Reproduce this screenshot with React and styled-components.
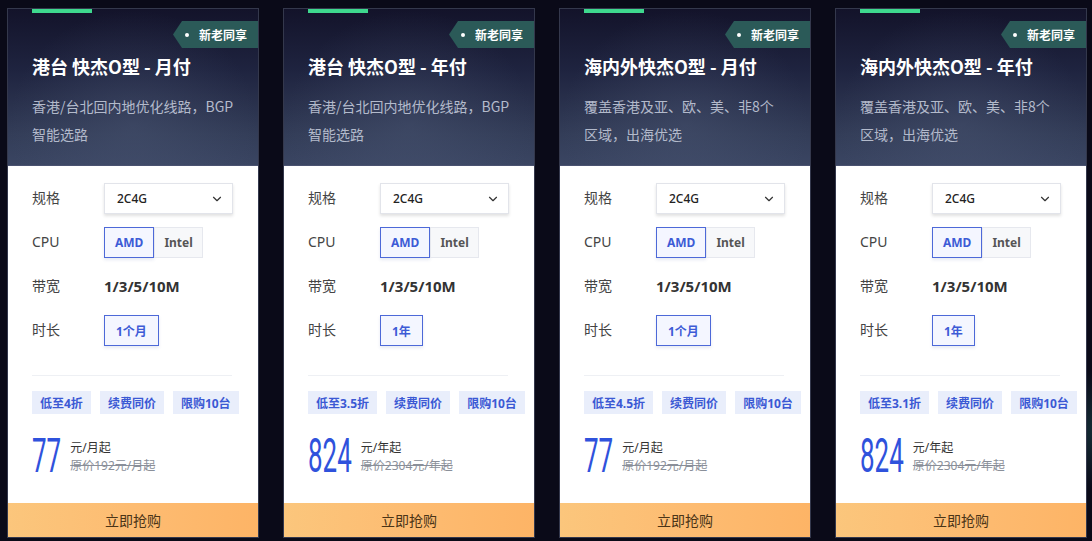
import React from "react";
import styled, { createGlobalStyle } from "styled-components";
import { ChevronDown } from "lucide-react";

const Global = createGlobalStyle`
  html, body { margin: 0; padding: 0; }
  body {
    background: #0a0a18;
    font-family: "Noto Sans", "Noto Sans CJK SC", sans-serif;
    width: 1092px;
    height: 541px;
    overflow: hidden;
  }
`;

const Page = styled.div`
  position: relative;
  width: 1092px;
  height: 541px;
  box-sizing: border-box;
  padding: 8px 0 0 7px;
  display: flex;
  gap: 24px;
  background:
    radial-gradient(circle at 1100px 430px, rgba(40, 110, 110, 0.35) 0, rgba(10, 10, 24, 0) 60px),
    #0a0a18;
`;

const Card = styled.div`
  width: 252px;
  height: 530px;
  box-sizing: border-box;
  border: 1px solid #34384c;
  display: flex;
  flex-direction: column;
  background: #fff;
`;

const Header = styled.div`
  position: relative;
  height: 157px;
  box-sizing: border-box;
  padding: 44px 24px 0 24px;
  background:
    radial-gradient(ellipse at 50% 75%, rgba(80, 92, 122, 0.35) 0, rgba(0, 0, 0, 0) 70%),
    linear-gradient(180deg, #13132a 0%, #1f2440 40%, #333d58 80%, #3a4562 100%);
  border-bottom: 1px solid #4a5270;
`;

const TopBar = styled.div`
  position: absolute;
  left: 24px;
  top: 0;
  width: 60px;
  height: 4px;
  background: #3ed88e;
`;

const Badge = styled.div`
  position: absolute;
  right: 0;
  top: 12px;
  height: 27px;
  box-sizing: border-box;
  padding: 0 11px 0 26px;
  display: flex;
  align-items: center;
  background: #2b5a58;
  clip-path: polygon(9px 0, 100% 0, 100% 100%, 9px 100%, 0 50%);
  color: #fff;
  font-size: 12px;
  font-weight: 700;
  font-family: "Noto Sans CJK SC", sans-serif;

  &::before {
    content: "";
    position: absolute;
    left: 12px;
    top: 11.5px;
    width: 4px;
    height: 4px;
    border-radius: 50%;
    background: #fff;
  }
`;

const Title = styled.div`
  color: #fff;
  font-size: 18px;
  font-weight: 700;
  line-height: 26px;
  font-family: "Noto Sans CJK SC", sans-serif;
  white-space: nowrap;
`;

const Desc = styled.div`
  margin-top: 13px;
  color: #b3bacb;
  font-size: 14px;
  line-height: 28px;
  font-family: "Noto Sans CJK SC", sans-serif;
`;

const Body = styled.div`
  flex: 1;
  padding: 17px 24px 0 24px;
  display: flex;
  flex-direction: column;
`;

const Rows = styled.div`
  display: flex;
  flex-direction: column;
  gap: 13px;
`;

const Row = styled.div`
  display: flex;
  align-items: center;
  height: 31px;
`;

const Label = styled.div`
  width: 72px;
  flex: none;
  color: #444;
  font-size: 14px;
  line-height: 20px;
  margin-top: -1px;
  font-family: "Noto Sans", "Noto Sans CJK SC", sans-serif;
`;

const Select = styled.div`
  width: 129px;
  height: 31px;
  box-sizing: border-box;
  border: 1px solid #e2e4ea;
  box-shadow: 0 2px 3px rgba(0, 0, 0, 0.12);
  display: flex;
  align-items: center;
  justify-content: space-between;
  padding: 0 8px 0 12px;
  color: #222;
  font-size: 12px;
  font-weight: 500;
  background: #fff;
`;

const Group = styled.div`
  display: flex;
`;

const Option = styled.div`
  height: 31px;
  box-sizing: border-box;
  padding: 0 ${(p) => p.$pad || 12}px;
  display: flex;
  align-items: center;
  font-size: 12px;
  font-weight: 700;
  font-family: "Noto Sans", "Noto Sans CJK SC", sans-serif;
  border: 1px solid ${(p) => (p.$active ? "#4d69d8" : "#e6e8ee")};
  background: ${(p) => (p.$active ? "#f4f6ff" : "#f7f8fa")};
  color: ${(p) => (p.$active ? "#3d5bd6" : "#555")};
  box-shadow: ${(p) => (p.$active ? "0 2px 3px rgba(60, 80, 160, 0.12)" : "none")};
`;

const Value = styled.div`
  color: #333;
  font-size: 15px;
  font-weight: 700;
  margin-top: -1px;
`;

const Divider = styled.div`
  margin-top: 29px;
  height: 1px;
  width: 200px;
  background: #eef0f4;
`;

const Tags = styled.div`
  margin-top: 15px;
  display: flex;
  gap: 9px;
`;

const Tag = styled.div`
  height: 23px;
  padding: 0 8px;
  display: flex;
  align-items: center;
  background: #e9eefb;
  color: #3b59d4;
  font-size: 12px;
  font-weight: 700;
  white-space: nowrap;
  font-family: "Noto Sans", "Noto Sans CJK SC", sans-serif;
`;

const PriceRow = styled.div`
  margin-top: 23px;
  display: flex;
  align-items: center;
  gap: 9px;
`;

const Num = styled.div`
  width: ${(p) => p.$digits * 14.6}px;
  height: 38px;
  overflow: visible;
  white-space: nowrap;
`;

const NumText = styled.span`
  display: inline-block;
  font-family: Roboto, sans-serif;
  font-weight: 400;
  font-size: 48px;
  line-height: 38px;
  color: #2f52dc;
  transform: scaleX(0.54);
  transform-origin: left center;
`;

const Units = styled.div`
  display: flex;
  flex-direction: column;
  font-size: 12px;
  line-height: 18px;
  margin-top: 2px;
  font-family: "Noto Sans", "Noto Sans CJK SC", sans-serif;
`;

const Unit = styled.div`
  color: #333;
`;

const Orig = styled.div`
  color: #8a8f99;
  text-decoration: line-through;
`;

const Buy = styled.div`
  height: 34px;
  display: flex;
  align-items: center;
  justify-content: center;
  background: linear-gradient(90deg, #fbc67c 0%, #fdbc72 50%, #fdb466 100%);
  color: #4a3417;
  font-size: 14px;
  font-family: "Noto Sans CJK SC", sans-serif;
`;

const plans = [
  {
    title: "港台 快杰O型 - 月付",
    desc: "香港/台北回内地优化线路，BGP智能选路",
    dur: "1个月",
    discount: "低至4折",
    price: "77",
    unit: "元/月起",
    orig: "原价192元/月起",
  },
  {
    title: "港台 快杰O型 - 年付",
    desc: "香港/台北回内地优化线路，BGP智能选路",
    dur: "1年",
    discount: "低至3.5折",
    price: "824",
    unit: "元/年起",
    orig: "原价2304元/年起",
  },
  {
    title: "海内外快杰O型 - 月付",
    desc: "覆盖香港及亚、欧、美、非8个区域，出海优选",
    dur: "1个月",
    discount: "低至4.5折",
    price: "77",
    unit: "元/月起",
    orig: "原价192元/月起",
  },
  {
    title: "海内外快杰O型 - 年付",
    desc: "覆盖香港及亚、欧、美、非8个区域，出海优选",
    dur: "1年",
    discount: "低至3.1折",
    price: "824",
    unit: "元/年起",
    orig: "原价2304元/年起",
  },
];

function PlanCard({ plan }) {
  return (
    <Card>
      <Header>
        <TopBar />
        <Badge>新老同享</Badge>
        <Title>{plan.title}</Title>
        <Desc>{plan.desc}</Desc>
      </Header>
      <Body>
        <Rows>
          <Row>
            <Label>规格</Label>
            <Select>
              <span>2C4G</span>
              <ChevronDown size={14} strokeWidth={2} color="#333" />
            </Select>
          </Row>
          <Row>
            <Label>CPU</Label>
            <Group>
              <Option $active $pad={10}>AMD</Option>
              <Option $pad={9}>Intel</Option>
            </Group>
          </Row>
          <Row>
            <Label>带宽</Label>
            <Value>1/3/5/10M</Value>
          </Row>
          <Row>
            <Label>时长</Label>
            <Option $active $pad={11}>{plan.dur}</Option>
          </Row>
        </Rows>
        <Divider />
        <Tags>
          <Tag>{plan.discount}</Tag>
          <Tag>续费同价</Tag>
          <Tag>限购10台</Tag>
        </Tags>
        <PriceRow>
          <Num $digits={plan.price.length}>
            <NumText>{plan.price}</NumText>
          </Num>
          <Units>
            <Unit>{plan.unit}</Unit>
            <Orig>{plan.orig}</Orig>
          </Units>
        </PriceRow>
      </Body>
      <Buy>立即抢购</Buy>
    </Card>
  );
}

export default function App() {
  return (
    <>
      <Global />
      <Page>
        {plans.map((p) => (
          <PlanCard key={p.title} plan={p} />
        ))}
      </Page>
    </>
  );
}
